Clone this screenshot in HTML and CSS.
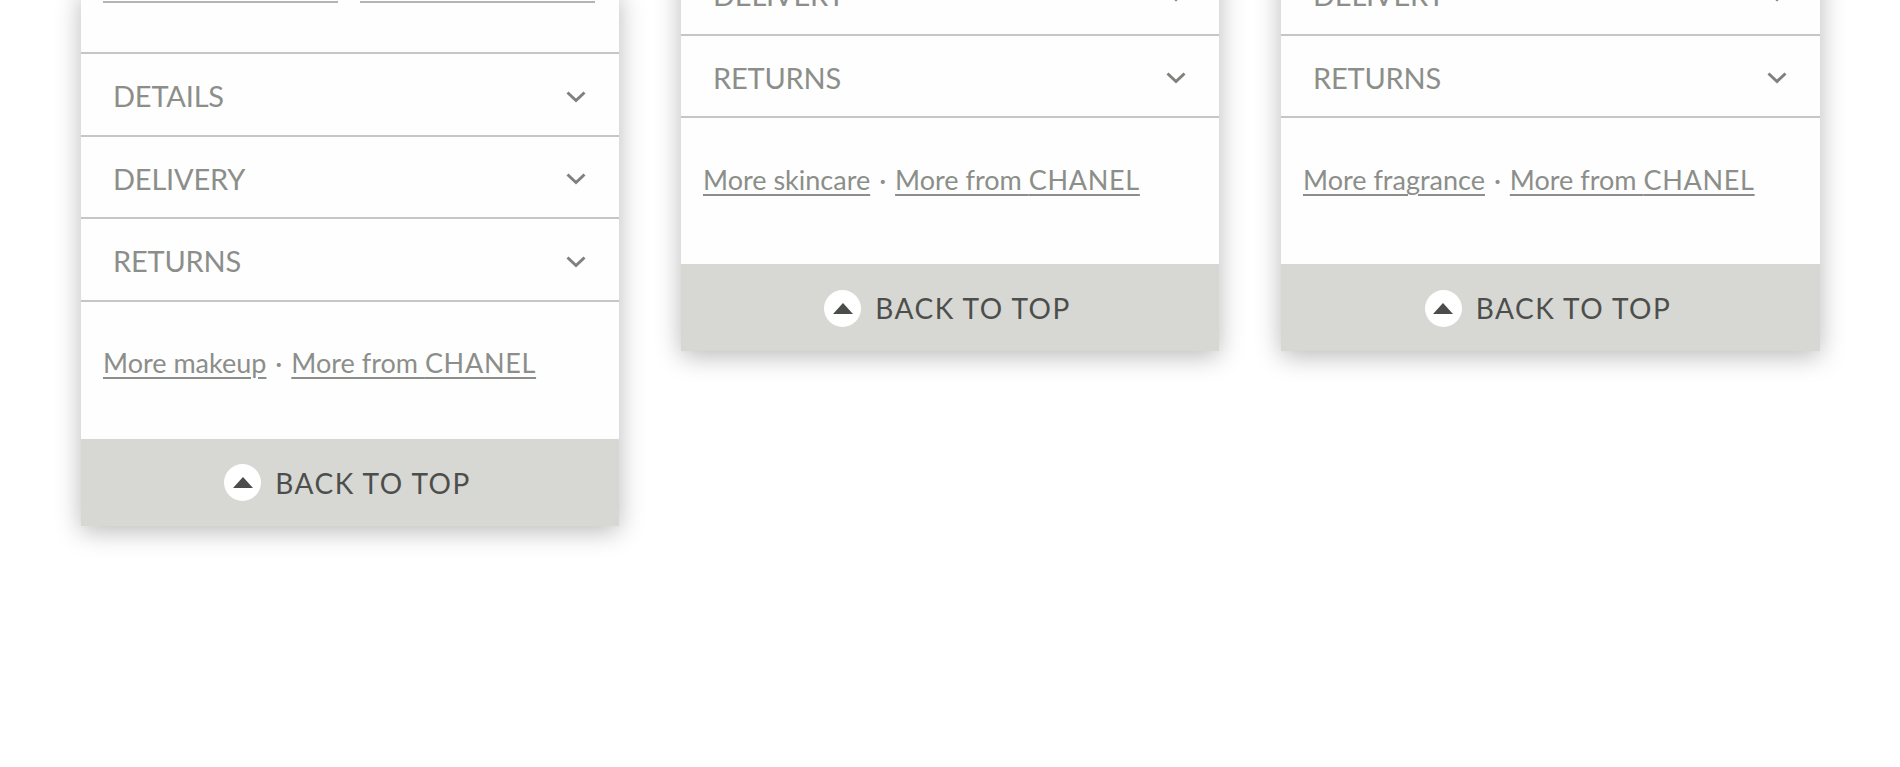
FILE: index.html
```html
<!DOCTYPE html>
<html lang="en">
<head>
<meta charset="utf-8">
<title>Product cards</title>
<link rel="stylesheet" href="styles.css">
</head>
<body>
<main class="page">
  <article class="card card-first">
    <div class="fields">
      <div class="field"></div>
      <div class="field"></div>
    </div>
    <div class="row"><span>DETAILS</span><svg class="chev" viewBox="0 0 20 12"><path d="M1.5 1.5 10 9.5l8.500-8"/></svg></div>
    <div class="row"><span>DELIVERY</span><svg class="chev" viewBox="0 0 20 12"><path d="M1.5 1.5 10 9.5l8.500-8"/></svg></div>
    <div class="row"><span>RETURNS</span><svg class="chev" viewBox="0 0 20 12"><path d="M1.5 1.5 10 9.5l8.500-8"/></svg></div>
    <p class="more"><a href="#">More makeup</a> <span class="dot">·</span> <a href="#">More from <span class="brand">CHANEL</span></a></p>
    <a class="top" href="#"><span class="circle"><svg viewBox="0 0 20 11"><path d="M10 0 20 11H0z"/></svg></span>BACK TO TOP</a>
  </article>
  <article class="card card-cut">
    <div class="row"><span>DELIVERY</span><svg class="chev" viewBox="0 0 20 12"><path d="M1.5 1.5 10 9.5l8.500-8"/></svg></div>
    <div class="row"><span>RETURNS</span><svg class="chev" viewBox="0 0 20 12"><path d="M1.5 1.5 10 9.5l8.500-8"/></svg></div>
    <p class="more more-tall"><a href="#">More skincare</a> <span class="dot">·</span> <a href="#">More from <span class="brand">CHANEL</span></a></p>
    <a class="top" href="#"><span class="circle"><svg viewBox="0 0 20 11"><path d="M10 0 20 11H0z"/></svg></span>BACK TO TOP</a>
  </article>
  <article class="card card-cut">
    <div class="row"><span>DELIVERY</span><svg class="chev" viewBox="0 0 20 12"><path d="M1.5 1.5 10 9.5l8.500-8"/></svg></div>
    <div class="row"><span>RETURNS</span><svg class="chev" viewBox="0 0 20 12"><path d="M1.5 1.5 10 9.5l8.500-8"/></svg></div>
    <p class="more more-tall"><a href="#">More fragrance</a> <span class="dot">·</span> <a href="#">More from <span class="brand">CHANEL</span></a></p>
    <a class="top" href="#"><span class="circle"><svg viewBox="0 0 20 11"><path d="M10 0 20 11H0z"/></svg></span>BACK TO TOP</a>
  </article>
</main>
</body>
</html>
```
FILE: styles.css
```css
html, body {
  margin: 0;
  height: 767px;
  overflow: hidden;
  background: #fff;
}
.page {
  display: grid;
  grid-template-columns: 538px 538px 539px;
  column-gap: 62px;
  align-items: start;
  padding-left: 81px;
  font-family: Lato, "Liberation Sans", sans-serif;
}
.card {
  display: flex;
  flex-direction: column;
  background: #fefefe;
  box-shadow: 0 5px 24px rgba(0, 0, 0, 0.28);
}
.card-first { margin-top: -10px; }
.card-cut { margin-top: -47px; }
.fields {
  display: flex;
  gap: 22px;
  height: 62px;
  padding: 0 24px 0 22px;
  border-bottom: 2px solid #c6c6c3;
}
.field {
  flex: 1;
  height: 11px;
  border-bottom: 2px solid #b4b5b1;
}
.row {
  display: flex;
  align-items: center;
  justify-content: space-between;
  box-sizing: border-box;
  height: 82.5px;
  padding: 3px 33px 0 32px;
  border-bottom: 2px solid #c6c6c3;
  font-size: 29px;
  letter-spacing: -0.2px;
  color: #8c8e8a;
}
.chev {
  width: 20px;
  height: 12px;
  margin-top: 2px;
  fill: none;
  stroke: #7f817d;
  stroke-width: 3;
}
.more {
  margin: 0;
  height: 137px;
  padding: 43px 22px 0;
  box-sizing: border-box;
  font-size: 27px;
  line-height: 36px;
  color: #8c8e8a;
}
.more-tall {
  height: 146px;
  padding-top: 44px;
}
.more a {
  color: #8c8e8a;
  text-decoration: underline;
  text-decoration-thickness: 2px;
  text-underline-offset: 4px;
}
.dot { margin: 0 2px; }
.brand { letter-spacing: 0.7px; }
.top {
  display: flex;
  align-items: center;
  justify-content: center;
  gap: 14px;
  box-sizing: border-box;
  height: 87px;
  padding: 1px 5px 0 0;
  background: #d7d7d3;
  color: #4c4e4c;
  font-size: 28px;
  letter-spacing: 1.5px;
  text-decoration: none;
}
.circle {
  display: flex;
  align-items: center;
  justify-content: center;
  width: 37px;
  height: 37px;
  border-radius: 50%;
  background: #fff;
}
.circle svg {
  width: 20px;
  height: 11px;
  fill: #4a4d4a;
}
```
